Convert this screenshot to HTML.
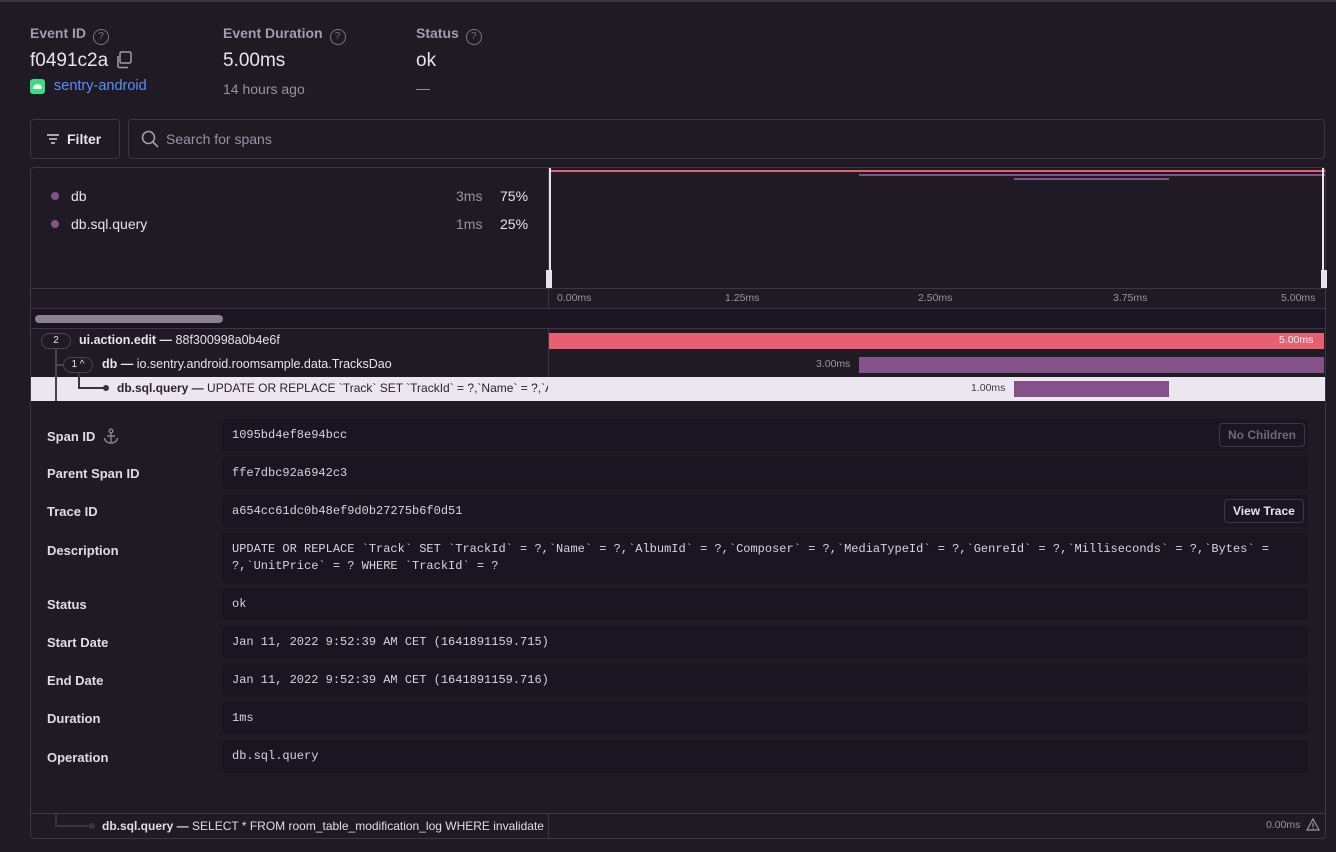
<!DOCTYPE html>
<html><head><meta charset="utf-8"><style>
*{box-sizing:border-box;margin:0;padding:0}
body{width:1336px;height:852px;background:#1f1a24;font-family:"Liberation Sans",sans-serif;color:#e8e3ee;position:relative;overflow:hidden}
.a{position:absolute;white-space:nowrap}
.lbl{font-size:14px;font-weight:bold;color:#a39cac}
.q{display:inline-block;width:16px;height:16px;border:1.3px solid #7c7585;border-radius:50%;font-size:10px;text-align:center;line-height:13px;color:#7c7585;vertical-align:-1px;margin-left:7px;font-weight:normal}
.big{font-size:19px;color:#e8e3ee}
.box{position:absolute;left:222px;width:1086px;background:#1a1520;border-radius:4px;font-family:"Liberation Mono",monospace;font-size:12px;color:#d9d3e0;padding-left:10px}
.dl{position:absolute;left:47px;font-size:13px;font-weight:bold;color:#e1dbe7}
.btn{position:absolute;border:1px solid #3d3647;border-radius:4px;font-size:12px;font-weight:bold;padding:0 8px;height:24px;line-height:22px}
.sm{font-size:10.5px;color:#9a93a3}
</style></head><body>
<div class="a" style="left:0;top:0;width:1336px;height:2px;background:#3a3342"></div>
<div class="a lbl" style="left:30px;top:25px">Event ID<span class="q">?</span></div>
<div class="a lbl" style="left:223px;top:25px">Event Duration<span class="q">?</span></div>
<div class="a lbl" style="left:416px;top:25px">Status<span class="q">?</span></div>
<div class="a big" style="left:30px;top:50px">f0491c2a</div>
<svg class="a" style="left:115px;top:51px" width="18" height="18" viewBox="0 0 18 18" fill="none" stroke="#a39cac" stroke-width="1.5"><rect x="5" y="1" width="11" height="11" rx="1.5"/><path d="M3 5v10a1.5 1.5 0 0 0 1.5 1.5H13"/></svg>
<div class="a big" style="left:223px;top:50px">5.00ms</div>
<div class="a big" style="left:416px;top:50px">ok</div>
<div class="a" style="left:30px;top:79px;width:15px;height:15px;background:#3ddc84;border-radius:3px"></div>
<div class="a" style="left:33px;top:84px;width:9px;height:5px;background:#fff;border-radius:5px 5px 0 0"></div>
<div class="a" style="left:54px;top:78px;font-size:14.5px;color:#5c8ef7">sentry-android</div>
<div class="a" style="left:223px;top:81px;font-size:14px;color:#9a93a3">14 hours ago</div>
<div class="a" style="left:416px;top:80px;font-size:14px;color:#9a93a3">—</div>
<div class="a" style="left:30px;top:119px;width:90px;height:40px;border:1px solid #3d3647;border-radius:4px"></div>
<svg class="a" style="left:46px;top:133px" width="14" height="12" stroke="#d9d3e0" stroke-width="1.4"><path d="M1 2h12M3 6h8M5 10h4"/></svg>
<div class="a" style="left:67px;top:131px;font-size:14px;font-weight:bold">Filter</div>
<div class="a" style="left:128px;top:119px;width:1197px;height:40px;border:1px solid #3d3647;border-radius:4px"></div>
<svg class="a" style="left:141px;top:130px" width="18" height="18" fill="none" stroke="#a39cac" stroke-width="1.6"><circle cx="7.5" cy="7.5" r="6"/><path d="M12 12l5 5"/></svg>
<div class="a" style="left:166px;top:131px;font-size:14px;color:#9a93a3">Search for spans</div>

<div class="a" style="left:30px;top:167px;width:1296px;height:672px;border:1px solid #3d3647;border-radius:4px"></div>
<div class="a" style="left:548px;top:167px;width:1px;height:234px;background:#3d3647"></div>
<div class="a" style="left:31px;top:288px;width:1294px;height:1px;background:#3d3647"></div>
<div class="a" style="left:31px;top:308px;width:1294px;height:1px;background:#3d3647"></div>
<div class="a" style="left:31px;top:309px;width:1294px;height:19px;background:#1a1520"></div>
<div class="a" style="left:31px;top:328px;width:1294px;height:1px;background:#3d3647"></div>
<div class="a" style="left:35px;top:315px;width:188px;height:8px;background:#8a8290;border-radius:4px"></div>
<div class="a" style="left:51px;top:192px;width:8px;height:8px;border-radius:50%;background:#845189"></div>
<div class="a" style="left:51px;top:220px;width:8px;height:8px;border-radius:50%;background:#845189"></div>
<div class="a" style="left:71px;top:188px;font-size:14px">db</div>
<div class="a" style="left:71px;top:216px;font-size:14px">db.sql.query</div>
<div class="a" style="left:456px;top:188px;font-size:14px;color:#9a93a3">3ms</div>
<div class="a" style="left:456px;top:216px;font-size:14px;color:#9a93a3">1ms</div>
<div class="a" style="left:500px;top:188px;font-size:14px">75%</div>
<div class="a" style="left:500px;top:216px;font-size:14px">25%</div>
<!-- minimap -->
<div class="a" style="left:550px;top:170px;width:775px;height:2px;background:#e75f70"></div>
<div class="a" style="left:859px;top:174px;width:466px;height:2px;background:#845189"></div>
<div class="a" style="left:1014px;top:178px;width:155px;height:2px;background:#845189"></div>
<div class="a" style="left:549px;top:168px;width:2px;height:120px;background:#e8e3ee"></div>
<div class="a" style="left:546px;top:270px;width:6px;height:18px;background:#e8e3ee"></div>
<div class="a" style="left:1322px;top:168px;width:2px;height:120px;background:#e8e3ee"></div>
<div class="a" style="left:1321px;top:270px;width:6px;height:18px;background:#e8e3ee"></div>
<div class="a sm" style="left:557px;top:292px">0.00ms</div>
<div class="a sm" style="left:725px;top:292px">1.25ms</div>
<div class="a sm" style="left:918px;top:292px">2.50ms</div>
<div class="a sm" style="left:1113px;top:292px">3.75ms</div>
<div class="a sm" style="left:1281px;top:292px">5.00ms</div>
<!-- rows -->
<div class="a" style="left:41px;top:333px;width:30px;height:16px;border:1px solid #4a4353;border-radius:8px;font-size:10px;text-align:center;line-height:14px">2</div>
<div class="a" style="left:55px;top:349px;width:2px;height:52px;background:#4a4353"></div>
<div class="a" style="left:55px;top:364px;width:8px;height:2px;background:#4a4353"></div>
<div class="a" style="left:63px;top:357px;width:30px;height:16px;border:1px solid #4a4353;border-radius:8px;font-size:10px;text-align:center;line-height:14px">1 ^</div>
<div class="a" style="left:79px;top:333px;font-size:12.5px"><b>ui.action.edit —</b> 88f300998a0b4e6f</div>
<div class="a" style="left:102px;top:357px;font-size:12.5px"><b>db —</b> io.sentry.android.roomsample.data.TracksDao</div>
<div class="a" style="left:549px;top:333px;width:775px;height:16px;background:#e75f70"></div>
<div class="a" style="left:1279px;top:334px;font-size:10.5px;color:#fff">5.00ms</div>
<div class="a sm" style="left:816px;top:358px">3.00ms</div>
<div class="a" style="left:859px;top:357px;width:465px;height:16px;background:#845189"></div>
<div class="a" style="left:31px;top:377px;width:1294px;height:24px;background:#ebe6ef"></div>
<div class="a" style="left:548px;top:352px;width:1px;height:25px;background:#3d3647"></div>
<div class="a" style="left:55px;top:377px;width:2px;height:24px;background:#4a4353"></div>
<div class="a" style="left:78px;top:373px;width:2px;height:16px;background:#3a3342"></div>
<div class="a" style="left:78px;top:387px;width:28px;height:2px;background:#3a3342"></div>
<div class="a" style="left:103px;top:385px;width:6px;height:6px;border-radius:50%;background:#3a3342"></div>
<div class="a" style="left:117px;top:381px;font-size:12px;color:#2b2233;width:431px;overflow:hidden"><b>db.sql.query —</b> UPDATE OR REPLACE `Track` SET `TrackId` = ?,`Name` = ?,`Al</div>
<div class="a" style="left:971px;top:382px;font-size:10.5px;color:#3e3646">1.00ms</div>
<div class="a" style="left:1014px;top:381px;width:155px;height:16px;background:#845189"></div>
<!-- details -->
<div class="dl" style="top:428px">Span ID <svg width="16" height="16" viewBox="0 0 16 16" fill="none" stroke="#8a8290" stroke-width="1.4" style="vertical-align:-3px;margin-left:4px"><circle cx="8" cy="3" r="1.8"/><path d="M8 5v10M4 8h8M1.5 10a6.5 5 0 0 0 13 0"/></svg></div>
<div class="box" style="top:419px;height:32px;line-height:32px">1095bd4ef8e94bcc</div>
<div class="btn" style="left:1219px;top:423px;color:#6e6778">No Children</div>
<div class="dl" style="top:466px">Parent Span ID</div>
<div class="box" style="top:457px;height:32px;line-height:32px">ffe7dbc92a6942c3</div>
<div class="dl" style="top:504px">Trace ID</div>
<div class="box" style="top:495px;height:32px;line-height:32px">a654cc61dc0b48ef9d0b27275b6f0d51</div>
<div class="btn" style="left:1224px;top:499px;color:#e8e3ee">View Trace</div>
<div class="dl" style="top:543px">Description</div>
<div class="box" style="top:533px;height:50px;line-height:17px;padding-top:8px;white-space:normal">UPDATE OR REPLACE `Track` SET `TrackId` = ?,`Name` = ?,`AlbumId` = ?,`Composer` = ?,`MediaTypeId` = ?,`GenreId` = ?,`Milliseconds` = ?,`Bytes` =<br>?,`UnitPrice` = ? WHERE `TrackId` = ?</div>
<div class="dl" style="top:597px">Status</div>
<div class="box" style="top:588px;height:32px;line-height:32px">ok</div>
<div class="dl" style="top:635px">Start Date</div>
<div class="box" style="top:626px;height:32px;line-height:32px">Jan 11, 2022 9:52:39 AM CET (1641891159.715)</div>
<div class="dl" style="top:673px">End Date</div>
<div class="box" style="top:664px;height:32px;line-height:32px">Jan 11, 2022 9:52:39 AM CET (1641891159.716)</div>
<div class="dl" style="top:711px">Duration</div>
<div class="box" style="top:702px;height:32px;line-height:32px">1ms</div>
<div class="dl" style="top:750px">Operation</div>
<div class="box" style="top:740px;height:33px;line-height:33px">db.sql.query</div>
<div class="a" style="left:31px;top:813px;width:1294px;height:1px;background:#3d3647"></div>
<div class="a" style="left:548px;top:813px;width:1px;height:25px;background:#3d3647"></div>
<div class="a" style="left:55px;top:813px;width:2px;height:13px;background:#3a3342"></div>
<div class="a" style="left:55px;top:825px;width:36px;height:2px;background:#3a3342"></div>
<div class="a" style="left:89px;top:823px;width:6px;height:6px;border-radius:50%;background:#3a3342"></div>
<div class="a" style="left:102px;top:819px;font-size:12px;color:#e1dbe7;width:446px;overflow:hidden"><b>db.sql.query —</b> SELECT * FROM room_table_modification_log WHERE invalidate</div>
<div class="a sm" style="left:1266px;top:819px">0.00ms</div>
<svg class="a" style="left:1306px;top:818px" width="14" height="13" fill="none" stroke="#9a93a3" stroke-width="1.2"><path d="M7 1L13 12H1z M7 5v4 M7 10v1"/></svg>
</body></html>
